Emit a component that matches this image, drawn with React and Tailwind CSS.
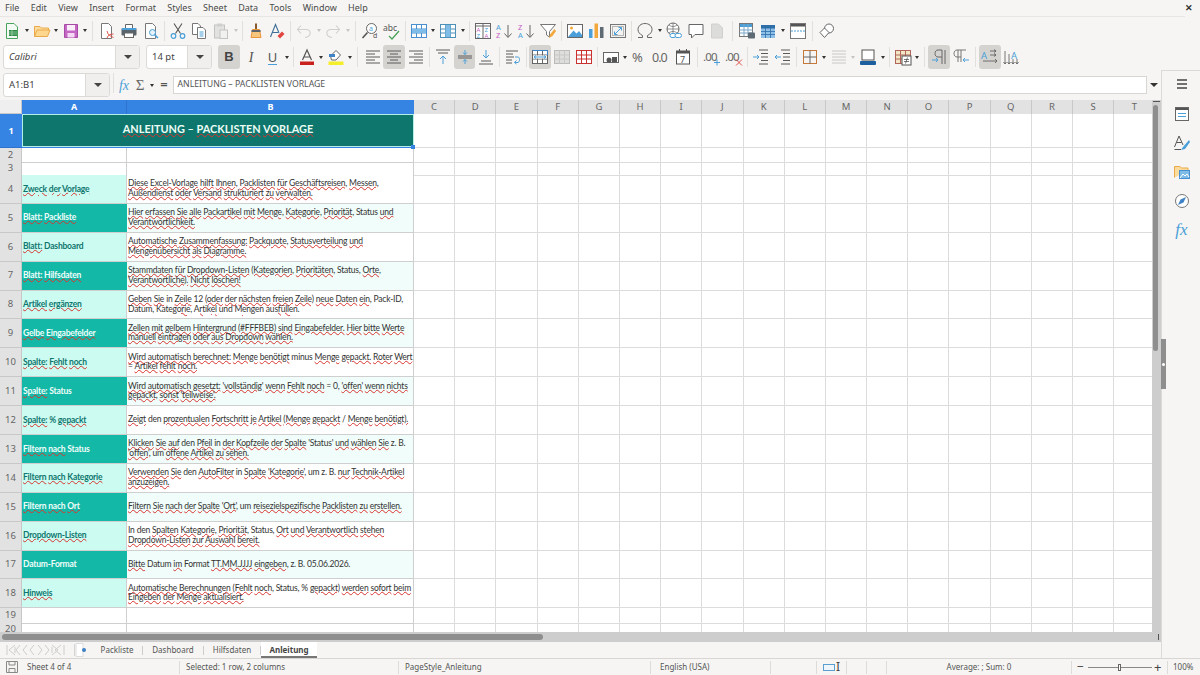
const GRAY = "#5a5a5a";
const BLUE = "#4a9fd8";

const Svg = ({ children, size = 18 }) => (
  <svg width={size} height={size} viewBox="0 0 18 18" fill="none" strokeWidth="1">
    {children}
  </svg>
);

const Btn = ({ children, on }) => (
  <div className={on ? "flex h-6 w-[21.7px] shrink-0 items-center justify-center rounded-[3px] bg-[#d5d3d0]" : "flex h-6 w-[21.7px] shrink-0 items-center justify-center"}>
    {children}
  </div>
);

const Drop = ({ dim }) => (
  <div className="flex h-6 w-[7.5px] shrink-0 items-center justify-center">
    <div className={dim ? "h-0 w-0 border-x-[2.5px] border-t-[3px] border-x-transparent border-t-[#c4c4c4]" : "h-0 w-0 border-x-[2.5px] border-t-[3px] border-x-transparent border-t-[#333]"} />
  </div>
);

const Sep = ({ wide }) => (
  <div className={wide ? "flex h-6 w-[7.5px] shrink-0 justify-center py-[2px]" : "flex h-6 w-[5.3px] shrink-0 justify-center py-[2px]"}>
    <div className="w-px bg-[#e2e0dd]" />
  </div>
);

const Lines = ({ rows, color = GRAY }) => (
  <>
    {rows.map(([x1, x2, y], i) => (
      <path key={i} d={`M${x1} ${y}H${x2}`} stroke={color} />
    ))}
  </>
);

const Grid3 = ({ stroke, fill = "#fff" }) => (
  <>
    <rect x="1.5" y="2.5" width="15" height="13" fill={fill} stroke={stroke} />
    <path d="M1.5 7H16.5M1.5 11H16.5M6.5 2.5V15.5M11.5 2.5V15.5" stroke={stroke} />
  </>
);

const icons = {
  new: (
    <Svg>
      <path d="M3.5 1.5H11L14.5 5V16.5H3.5Z" fill="#f4fbf4" stroke="#4aa35a" />
      <rect x="6" y="8" width="8" height="6" fill="#2e8b46" />
      <path d="M6 10H14M6 12H14M9 8V14" stroke="#bfe5c6" strokeWidth=".6" />
    </Svg>
  ),
  open: (
    <Svg>
      <path d="M1.5 14.5V4.5H7L8.5 6H15.5V8" fill="#fbdc9c" stroke="#eaa94a" />
      <path d="M1.5 14.5L4 8H17L14.5 14.5Z" fill="#fdd78d" stroke="#eaa94a" />
    </Svg>
  ),
  save: (
    <Svg>
      <path d="M2.5 2.5H15.5V15.5H2.5Z" fill="#c568c5" stroke="#a64aa6" />
      <rect x="5" y="3" width="8" height="5.5" fill="#fbeefb" />
      <rect x="5.5" y="11" width="7" height="4.5" fill="#f5d9f5" />
    </Svg>
  ),
  pdf: (
    <Svg>
      <path d="M3.5 1.5H10.5L13.5 4.5V16.5H3.5Z" fill="#fff" stroke="#777" />
      <path d="M9 9C10 13 12 14 15.5 15.5M9 16C10.5 13 11.5 12 15.5 12" stroke="#e0524a" />
    </Svg>
  ),
  print: (
    <Svg>
      <path d="M5.5 6V2.5H12.5V6" fill="#fff" stroke="#666" />
      <rect x="1.5" y="6" width="15" height="7.5" rx="1" fill="#59636b" />
      <rect x="2" y="6" width="14" height="2" fill="#4a9fd8" />
      <rect x="4.5" y="11" width="9" height="4.5" fill="#fff" stroke="#666" />
    </Svg>
  ),
  preview: (
    <Svg>
      <path d="M3.5 1.5H10.5L13.5 4.5V16.5H3.5Z" fill="#fff" stroke="#777" />
      <circle cx="10.5" cy="10.5" r="3" fill="#e7f3fb" stroke={BLUE} />
      <path d="M12.5 12.5L16 16" stroke={BLUE} strokeWidth="1.5" />
    </Svg>
  ),
  cut: (
    <Svg>
      <path d="M5 1.5L11.5 11.5M13 1.5L6.5 11.5" stroke="#555" strokeWidth="1.1" />
      <circle cx="4.5" cy="14" r="2.3" stroke={BLUE} strokeWidth="1.2" />
      <circle cx="13.5" cy="14" r="2.3" stroke={BLUE} strokeWidth="1.2" />
    </Svg>
  ),
  copy: (
    <Svg>
      <path d="M2.5 1.5H8L10.5 4V12.5H2.5Z" fill="#fff" stroke="#777" />
      <path d="M7.5 5.5H13L15.5 8V16.5H7.5Z" fill="#fff" stroke="#777" />
      <path d="M9.5 10H13.5M9.5 12H13.5M9.5 14H13.5" stroke={BLUE} />
    </Svg>
  ),
  paste: (
    <Svg>
      <rect x="2.5" y="3" width="10" height="13" fill="#e2e2e0" stroke="#c3c3c1" />
      <rect x="5" y="1.5" width="5" height="3" fill="#cfcfcd" />
      <rect x="8" y="8" width="7.5" height="8.5" fill="#f1f1f0" stroke="#c3c3c1" />
    </Svg>
  ),
  clone: (
    <Svg>
      <path d="M9 1.5V7" stroke="#8a5a2c" strokeWidth="2" />
      <path d="M5.5 7.5H12.5L14 15.5H4Z" fill="#f6c67e" stroke="#e8963a" />
      <rect x="4.5" y="8" width="9" height="2" fill="#59636b" />
    </Svg>
  ),
  clear: (
    <Svg>
      <path d="M2.5 15L7.5 2.5L11 11M4.5 10.5H10" stroke="#3f6f98" strokeWidth="1.1" />
      <path d="M9.5 14L14 9.5L16.5 12L12 16.5Z" fill="#e2453f" />
    </Svg>
  ),
  undo: (
    <Svg>
      <path d="M3 7.5H11C17 7.5 16.5 15 10 15.5M6 3.5L2.5 7.5L6 11.5" stroke="#d0d0ce" strokeWidth="1.1" />
    </Svg>
  ),
  redo: (
    <Svg>
      <path d="M15 7.5H7C1 7.5 1.5 15 8 15.5M12 3.5L15.5 7.5L12 11.5" stroke="#d0d0ce" strokeWidth="1.1" />
    </Svg>
  ),
  find: (
    <Svg>
      <circle cx="10.5" cy="6.5" r="5" fill="#fff" stroke="#666" />
      <path d="M6.5 10.5L1.5 16" stroke="#555" strokeWidth="1.6" />
      <text x="8" y="9" fontSize="7" fill={BLUE} fontFamily="Noto Sans">a</text>
      <text x="12" y="16" fontSize="7" fill="#555" fontFamily="Noto Sans">d</text>
    </Svg>
  ),
  spell: (
    <Svg>
      <text x="0" y="9" fontSize="8.5" fill="#555" fontFamily="Noto Sans">abc</text>
      <path d="M6 14L9 17L16 9" stroke="#4aa35a" strokeWidth="1.3" />
    </Svg>
  ),
  rows: (
    <Svg>
      <Grid3 stroke="#4a8fd0" />
      <rect x="2" y="7" width="14" height="4" fill="#7fbde8" />
    </Svg>
  ),
  cols: (
    <Svg>
      <Grid3 stroke="#4f90b8" />
      <rect x="6.5" y="3" width="5" height="12" fill="#7fbde8" />
    </Svg>
  ),
  sort: (
    <Svg>
      <rect x="1.5" y="1.5" width="15" height="15" fill="#fff" stroke="#666" />
      <path d="M1.5 4H16.5M9 1.5V16.5" stroke="#666" />
      <text x="2.5" y="10" fontSize="6" fill="#c45dc4" fontFamily="Noto Sans">A</text>
      <text x="2.5" y="16" fontSize="6" fill="#4a9fd8" fontFamily="Noto Sans">Z</text>
      <text x="10.5" y="10" fontSize="6" fill="#4a9fd8" fontFamily="Noto Sans">Z</text>
      <text x="10.5" y="16" fontSize="6" fill="#c45dc4" fontFamily="Noto Sans">A</text>
    </Svg>
  ),
  asc: (
    <Svg>
      <text x="1" y="8" fontSize="7.5" fill={BLUE} fontFamily="Noto Sans">A</text>
      <text x="1" y="16" fontSize="7.5" fill="#c45dc4" fontFamily="Noto Sans">Z</text>
      <path d="M13 3V15M9.5 11.5L13 15.5L16.5 11.5" stroke="#666" />
    </Svg>
  ),
  desc: (
    <Svg>
      <text x="1" y="8" fontSize="7.5" fill="#c45dc4" fontFamily="Noto Sans">Z</text>
      <text x="1" y="16" fontSize="7.5" fill={BLUE} fontFamily="Noto Sans">A</text>
      <path d="M13 3V15M9.5 11.5L13 15.5L16.5 11.5" stroke="#666" />
    </Svg>
  ),
  filter: (
    <Svg>
      <path d="M1.5 2.5H16.5L10.5 9.5V15L7.5 13V9.5Z" fill="#fff" stroke="#777" />
      <path d="M15.5 7L11 12.5L10 16L13.5 14L17 9Z" fill="#f2a83c" />
    </Svg>
  ),
  image: (
    <Svg>
      <rect x="1.5" y="2.5" width="15" height="13" fill="#fff" stroke="#666" />
      <circle cx="5.5" cy="6" r="1.5" fill="#f2a83c" />
      <path d="M2 15L7.5 8.5L10.5 11.5L13 9L16 13V15Z" fill={BLUE} />
    </Svg>
  ),
  chart: (
    <Svg>
      <rect x="2" y="7" width="3.5" height="9" fill={BLUE} />
      <rect x="7.5" y="1.5" width="3.5" height="14.5" fill="#f2a83c" />
      <rect x="13" y="5" width="3.5" height="11" fill="#5f6b74" />
    </Svg>
  ),
  frame: (
    <Svg>
      <rect x="1.5" y="2.5" width="15" height="13" fill="#f3f3f2" stroke="#777" />
      <rect x="3.5" y="4.5" width="11" height="9" stroke="#b5b5b5" />
      <path d="M6 12L12 6M9.5 5.5H12.5V8.5M5.5 9.5V12.5H8.5" stroke={BLUE} />
    </Svg>
  ),
  omega: (
    <Svg>
      <path d="M2 15.5H6.5V13.5C3.5 12 2 10 2 7.5C2 4 5 1.5 9 1.5S16 4 16 7.5C16 10 14.5 12 11.5 13.5V15.5H16" stroke="#666" />
    </Svg>
  ),
  link: (
    <Svg>
      <circle cx="8" cy="7" r="6" fill="#fff" stroke="#666" />
      <path d="M2 7H14M8 1V13M4 3C6 5 10 5 12 3M4 11C6 9 10 9 12 11" stroke="#666" strokeWidth=".7" />
      <rect x="5" y="11.5" width="6" height="4" rx="2" fill="#fff" stroke={BLUE} />
      <rect x="10" y="11.5" width="6.5" height="4" rx="2" fill="#fff" stroke={BLUE} />
    </Svg>
  ),
  comment: (
    <Svg>
      <path d="M2 2.5H16V12.5H8L4.5 16V12.5H2Z" fill="#fff" stroke="#666" />
    </Svg>
  ),
  note: (
    <Svg>
      <path d="M3.5 2H10.5L14.5 6V16H3.5Z" fill="#dcdcdb" stroke="#d0d0cf" />
    </Svg>
  ),
  freeze: (
    <Svg>
      <rect x="1.5" y="1.5" width="13" height="13" fill="#fff" stroke="#777" />
      <rect x="2" y="2" width="12" height="3" fill="#4a9fd8" />
      <path d="M1.5 8H14.5M1.5 11H14.5M6 2V14M10 2V14" stroke="#7aa7c7" />
      <rect x="10" y="10.5" width="7" height="6" rx="1" fill="#5f6b74" />
    </Svg>
  ),
  table: (
    <Svg>
      <rect x="2" y="3" width="14" height="13" fill="#8fc1e8" />
      <rect x="2" y="3" width="14" height="3.5" fill="#2f6fa8" />
      <path d="M2 9.5H16M2 12.5H16M6.5 3V16M11.5 3V16" stroke="#2f6fa8" strokeWidth=".8" />
    </Svg>
  ),
  split: (
    <Svg>
      <rect x="1.5" y="1.5" width="15" height="15" fill="#fff" stroke="#777" />
      <rect x="2" y="2" width="14" height="2.5" fill="#555" />
      <path d="M2 9H16" stroke={BLUE} strokeDasharray="2 1" />
    </Svg>
  ),
  shapes: (
    <Svg>
      <circle cx="11" cy="6.5" r="4.5" fill="#fff" stroke="#666" />
      <path d="M2 10.5L6.5 6L11 10.5L6.5 15.5Z" fill="#fff" stroke="#666" />
    </Svg>
  ),
  fontColor: (
    <Svg>
      <path d="M4.5 12L9 2L13.5 12M6 9H12" stroke="#555" strokeWidth="1.2" />
      <rect x="2" y="13.5" width="14" height="3.5" fill="#c9211e" />
    </Svg>
  ),
  hilite: (
    <Svg>
      <path d="M3.5 8L9 2.5L13.5 7L9 12H4.5Z" fill="#fff" stroke="#666" />
      <path d="M2 6H8V9H2Z" fill="#3f83c6" />
      <rect x="1.5" y="13.5" width="15" height="3.5" fill="#f5ee2a" />
    </Svg>
  ),
  alignLeft: <Svg><Lines rows={[[2, 16, 3], [2, 11, 6], [2, 16, 9], [2, 11, 12], [2, 16, 15]]} /></Svg>,
  alignCenter: <Svg><Lines rows={[[2, 16, 3], [5, 13, 6], [2, 16, 9], [5, 13, 12], [2, 16, 15]]} /></Svg>,
  alignRight: <Svg><Lines rows={[[2, 16, 3], [7, 16, 6], [2, 16, 9], [7, 16, 12], [2, 16, 15]]} /></Svg>,
  vTop: (
    <Svg>
      <Lines rows={[[2, 16, 2], [4, 14, 5]]} />
      <path d="M9 16V8M6 11L9 8L12 11" stroke={BLUE} />
    </Svg>
  ),
  vMid: (
    <Svg>
      <Lines rows={[[2, 16, 8], [2, 16, 10]]} />
      <path d="M9 2V6.5M7 4.5L9 6.5L11 4.5M9 16V11.5M7 13.5L9 11.5L11 13.5" stroke={BLUE} />
    </Svg>
  ),
  vBot: (
    <Svg>
      <Lines rows={[[4, 14, 13], [2, 16, 16]]} />
      <path d="M9 2V10M6 7L9 10L12 7" stroke={BLUE} />
    </Svg>
  ),
  wrap: (
    <Svg>
      <Lines rows={[[2, 14, 3], [2, 9, 6], [2, 10, 9], [2, 8, 12], [2, 8, 15]]} />
      <path d="M11 9H14C16 9 16 14 14 14.5H10.5M12.5 12.5L10.5 14.5L12.5 16" stroke={BLUE} />
    </Svg>
  ),
  merge: (
    <Svg>
      <Grid3 stroke="#666" />
      <rect x="2" y="7.5" width="14" height="3" fill="#fff" />
      <path d="M3 9H15M5 7.5L3 9L5 10.5M13 7.5L15 9L13 10.5" stroke={BLUE} />
      <path d="M1.5 2.5H16.5V7" stroke="#3c85c8" />
    </Svg>
  ),
  mergeOff: (
    <Svg>
      <rect x="1.5" y="2.5" width="15" height="13" fill="#dededc" stroke="#bbb" />
      <path d="M1.5 7H16.5M1.5 11H16.5M6.5 2.5V15.5M11.5 2.5V15.5" stroke="#c8c8c6" />
    </Svg>
  ),
  unmerge: <Svg><Grid3 stroke="#c9312e" /></Svg>,
  currency: (
    <Svg>
      <rect x="1.5" y="4.5" width="15" height="10" fill="#fff" stroke="#666" />
      <circle cx="7" cy="12" r="2.5" fill="#555" />
      <rect x="10" y="9" width="5" height="5" fill="#555" />
    </Svg>
  ),
  percent: (
    <Svg>
      <text x="1" y="14" fontSize="13" fill="#666" fontFamily="Noto Sans">%</text>
    </Svg>
  ),
  number: (
    <Svg>
      <text x="0" y="13.5" fontSize="12.5" letterSpacing="-1" fill="#666" fontFamily="Noto Sans">0.0</text>
    </Svg>
  ),
  date: (
    <Svg>
      <rect x="2.5" y="3" width="13" height="13" fill="#fff" stroke="#555" />
      <rect x="2.5" y="3" width="13" height="2.5" fill="#555" />
      <path d="M5.5 1V4M12.5 1V4" stroke="#555" />
      <text x="6" y="14.5" fontSize="9" fill="#555" fontFamily="Noto Sans">7</text>
    </Svg>
  ),
  addDec: (
    <Svg>
      <text x="0" y="13" fontSize="11.5" letterSpacing="-.8" fill="#666" fontFamily="Noto Sans">.00</text>
      <path d="M14 11.5V17.5M11 14.5H17" stroke={BLUE} />
    </Svg>
  ),
  delDec: (
    <Svg>
      <text x="0" y="13" fontSize="11.5" letterSpacing="-.8" fill="#666" fontFamily="Noto Sans">.00</text>
      <path d="M11 11.5L17 17.5M17 11.5L11 17.5" stroke="#e0524a" />
    </Svg>
  ),
  indent: (
    <Svg>
      <Lines rows={[[7, 16, 2], [9, 16, 5.5], [9, 16, 9], [9, 16, 12.5], [7, 16, 16]]} />
      <path d="M1 9H7M5 7L7 9L5 11" stroke={BLUE} />
    </Svg>
  ),
  outdent: (
    <Svg>
      <Lines rows={[[7, 16, 2], [9, 16, 5.5], [9, 16, 9], [9, 16, 12.5], [7, 16, 16]]} />
      <path d="M1 9H7M3 7L1 9L3 11" stroke={BLUE} />
    </Svg>
  ),
  borders: (
    <Svg>
      <rect x="2.5" y="2.5" width="13" height="13" stroke="#c67a3a" />
      <path d="M9 2.5V15.5M2.5 9H15.5" stroke="#666" />
    </Svg>
  ),
  borderStyle: <Svg><Lines rows={[[2, 16, 3], [2, 16, 6], [2, 16, 9], [2, 16, 12], [2, 16, 15]]} color="#c8c8c8" /></Svg>,
  borderColor: (
    <Svg>
      <rect x="3" y="2" width="12" height="10" fill="#fff" stroke="#555" />
      <rect x="1" y="13" width="16" height="4" rx="1" fill="#1c5e9e" />
    </Svg>
  ),
  cond: (
    <Svg>
      <Grid3 stroke="#b0645a" fill="#f3e6c7" />
      <rect x="8" y="8" width="9" height="9" fill="#fff" stroke="#555" />
      <path d="M10 11.5H15M10 13.5H15M13.5 9.5L11.5 15.5" stroke="#555" strokeWidth=".8" />
    </Svg>
  ),
  ltr: (
    <Svg>
      <path d="M12 2V16M15 2V16M12 2H8C4 2 4 9 8 9H12" stroke="#666" />
      <path d="M2 12H8M6 10L8 12L6 14" stroke={BLUE} />
    </Svg>
  ),
  rtl: (
    <Svg>
      <path d="M6 2V14M9 2V14M14 2H5C1 2 1 9 5 9H9" stroke="#777" />
      <path d="M11 12H17M13 10L11 12L13 14" stroke={BLUE} />
    </Svg>
  ),
  horiz: (
    <Svg>
      <text x="0" y="10.5" fontSize="9.5" fill={BLUE} fontFamily="Noto Sans">A</text>
      <path d="M9 3H15M13 1.5L15 3L13 4.5M9 7H15M13 5.5L15 7L13 8.5M2 13H16M14 11L16 13L14 15" stroke="#555" strokeWidth=".8" />
    </Svg>
  ),
  vert: (
    <Svg>
      <text x="8" y="10.5" fontSize="9.5" fill={BLUE} fontFamily="Noto Sans">A</text>
      <path d="M2 3V16M.5 14L2 16L3.5 14M6 6V16M4.5 14L6 16L7.5 14M10 11V16M8.5 14L10 16L11.5 14M14 11V16M12.5 14L14 16L15.5 14" stroke="#555" strokeWidth=".8" />
    </Svg>
  ),
};

const Ic = ({ n, on }) => <Btn on={on}>{icons[n]}</Btn>;

const Combo = ({ children, outer, drop, textClass }) => (
  <div className={`flex h-[23.5px] items-stretch rounded-[3px] border border-[#dcdad7] bg-white ${outer}`}>
    <div className={`flex flex-1 items-center pl-[5px] text-[9.5px] text-[#444] ${textClass}`}>{children}</div>
    <div className={`flex items-center justify-center rounded-r-[3px] border-l border-[#dcdad7] bg-[#f0efed] ${drop}`}>
      <div className="h-0 w-0 border-x-[4px] border-t-[4px] border-x-transparent border-t-[#444]" />
    </div>
  </div>
);

const MenuBar = () => (
  <div className="flex h-4 shrink-0 items-center justify-between pr-[7px] text-[9px] text-[#4a4a4a]">
    <div className="flex gap-[11.3px] pl-[5px]">
      {["File", "Edit", "View", "Insert", "Format", "Styles", "Sheet", "Data", "Tools", "Window", "Help"].map((m) => (
        <span key={m}>{m}</span>
      ))}
    </div>
    <span className="text-[9px] font-bold text-[#333]">✕</span>
  </div>
);

const ToolbarOne = () => (
  <div className="flex h-[27px] items-center pl-[1.5px]">
    <Ic n="new" /><Drop /><Ic n="open" /><Drop /><Ic n="save" /><Drop /><Sep wide />
    <Ic n="pdf" /><Ic n="print" /><Ic n="preview" /><Sep />
    <Ic n="cut" /><Ic n="copy" /><Ic n="paste" /><Drop dim /><Sep />
    <Ic n="clone" /><Ic n="clear" /><Sep />
    <Ic n="undo" /><Drop dim /><Ic n="redo" /><Drop dim /><Sep wide />
    <Ic n="find" /><Ic n="spell" /><Sep />
    <Ic n="rows" /><Drop /><Ic n="cols" /><Drop /><Sep />
    <Ic n="sort" /><Ic n="asc" /><Ic n="desc" /><Ic n="filter" /><Sep />
    <Ic n="image" /><Ic n="chart" /><Ic n="frame" /><Sep />
    <Ic n="omega" /><Drop /><Ic n="link" /><Ic n="comment" /><Ic n="note" /><Sep wide />
    <Ic n="freeze" /><Ic n="table" /><Drop /><Ic n="split" /><Sep wide />
    <Ic n="shapes" />
  </div>
);

const ToolbarTwo = () => (
  <div className="flex h-[26px] items-center pl-[3px]">
    <Combo outer="w-[137px]" drop="w-6" textClass="italic">Calibri</Combo>
    <Combo outer="ml-[6px] w-[66px]" drop="w-6" textClass="">14 pt</Combo>
    <div className="ml-[6px] flex h-6 w-[22px] shrink-0 items-center justify-center rounded-[3px] bg-[#d5d3d0] font-['Liberation_Sans',sans-serif] text-[13px] font-bold text-[#444]">B</div>
    <div className="flex h-6 w-[22px] shrink-0 items-center justify-center font-['Liberation_Serif',serif] text-[14px] italic text-[#555]">I</div>
    <div className="flex h-6 w-[21px] shrink-0 items-center justify-center">
      <span className="border-b border-[#4a9fd8] text-[13px] leading-[14px] text-[#555]">U</span>
    </div>
    <Drop /><Sep />
    <Ic n="fontColor" /><Drop /><Ic n="hilite" /><Drop /><Sep wide />
    <Ic n="alignLeft" /><Ic n="alignCenter" on /><Ic n="alignRight" /><Sep />
    <Ic n="vTop" /><Ic n="vMid" on /><Ic n="vBot" /><Sep />
    <Ic n="wrap" /><Sep />
    <Ic n="merge" on /><Ic n="mergeOff" /><Ic n="unmerge" /><Sep />
    <Ic n="currency" /><Drop /><Ic n="percent" /><Ic n="number" /><Ic n="date" /><Sep wide />
    <Ic n="addDec" /><Ic n="delDec" /><Sep />
    <Ic n="indent" /><Ic n="outdent" /><Sep />
    <Ic n="borders" /><Drop /><Ic n="borderStyle" /><Drop dim /><Ic n="borderColor" /><Drop /><Sep />
    <Ic n="cond" /><Drop /><Sep wide />
    <Ic n="ltr" on /><Ic n="rtl" /><Sep wide />
    <Ic n="horiz" on /><Ic n="vert" />
  </div>
);

const FormulaBar = () => (
  <div className="flex h-[30px] shrink-0 items-start pl-[3px] pt-[3px]">
    <Combo outer="w-[107px]" drop="w-6" textClass="">A1:B1</Combo>
    <div className="ml-[3px] h-5 w-px bg-[#e2e0dd]" />
    <div className="flex h-6 w-5 items-center justify-center font-['Liberation_Serif',serif] text-[14px] italic text-[#4a9fd8]">fx</div>
    <div className="flex h-6 w-3 items-center justify-center font-['Liberation_Serif',serif] text-[15px] text-[#666]">Σ</div>
    <div className="ml-[2px]"><Drop /></div>
    <div className="flex h-6 w-[17px] items-center justify-center text-[13px] font-semibold text-[#555]">=</div>
    <div className="mt-[3px] flex h-[18px] flex-1 items-center border border-[#d8d6d3] bg-white pl-[4px] text-[8.7px] text-[#555]">
      ANLEITUNG – PACKLISTEN VORLAGE
    </div>
    <div className="flex h-6 w-[14px] items-center justify-center">
      <div className="h-0 w-0 border-x-[4px] border-t-[4px] border-x-transparent border-t-[#333]" />
    </div>
  </div>
);

const plainWords = new Set(["in", "In", "den", "Status", "Status,", "'Status'", "Datum", "Datum,", "Format", "um", "z.", "B.", "minus", "Pack-ID,", "=", "0,", "/", "%", "12", "05.06.2026.", "Dashboard", "Datum-Format", "–"]);

const Spell = ({ text }) =>
  text.split(" ").map((w, i) => (
    <span key={i}>
      {i > 0 && " "}
      {plainWords.has(w) ? (
        w
      ) : (
        <span className="underline decoration-[#d8352f] decoration-wavy decoration-[0.6px] underline-offset-0">{w}</span>
      )}
    </span>
  ));

const rows = [
  [4, "Zweck der Vorlage", ["Diese Excel-Vorlage hilft Ihnen, Packlisten für Geschäftsreisen, Messen,", "Außendienst oder Versand strukturiert zu verwalten."]],
  [5, "Blatt: Packliste", ["Hier erfassen Sie alle Packartikel mit Menge, Kategorie, Priorität, Status und", "Verantwortlichkeit."]],
  [6, "Blatt: Dashboard", ["Automatische Zusammenfassung: Packquote, Statusverteilung und", "Mengenübersicht als Diagramme."]],
  [7, "Blatt: Hilfsdaten", ["Stammdaten für Dropdown-Listen (Kategorien, Prioritäten, Status, Orte,", "Verantwortliche). Nicht löschen!"]],
  [8, "Artikel ergänzen", ["Geben Sie in Zeile 12 (oder der nächsten freien Zeile) neue Daten ein, Pack-ID,", "Datum, Kategorie, Artikel und Mengen ausfüllen."]],
  [9, "Gelbe Eingabefelder", ["Zellen mit gelbem Hintergrund (#FFFBEB) sind Eingabefelder. Hier bitte Werte", "manuell eintragen oder aus Dropdown wählen."]],
  [10, "Spalte: Fehlt noch", ["Wird automatisch berechnet: Menge benötigt minus Menge gepackt. Roter Wert", "= Artikel fehlt noch."]],
  [11, "Spalte: Status", ["Wird automatisch gesetzt: 'vollständig' wenn Fehlt noch = 0, 'offen' wenn nichts", "gepackt, sonst 'teilweise'."]],
  [12, "Spalte: % gepackt", ["Zeigt den prozentualen Fortschritt je Artikel (Menge gepackt / Menge benötigt)."]],
  [13, "Filtern nach Status", ["Klicken Sie auf den Pfeil in der Kopfzeile der Spalte 'Status' und wählen Sie z. B.", "'offen', um offene Artikel zu sehen."]],
  [14, "Filtern nach Kategorie", ["Verwenden Sie den AutoFilter in Spalte 'Kategorie', um z. B. nur Technik-Artikel", "anzuzeigen."]],
  [15, "Filtern nach Ort", ["Filtern Sie nach der Spalte 'Ort', um reisezielspezifische Packlisten zu erstellen."]],
  [16, "Dropdown-Listen", ["In den Spalten Kategorie, Priorität, Status, Ort und Verantwortlich stehen", "Dropdown-Listen zur Auswahl bereit."]],
  [17, "Datum-Format", ["Bitte Datum im Format TT.MM.JJJJ eingeben, z. B. 05.06.2026."]],
  [18, "Hinweis", ["Automatische Berechnungen (Fehlt noch, Status, % gepackt) werden sofort beim", "Eingeben der Menge aktualisiert."]],
];

const rest = "CDEFGHIJKLMNOPQRST".split("");
const template = "grid grid-cols-[22px_105px_287px_repeat(18,41.2px)]";

const Blank = () => rest.map((c) => <div key={c} className="border-r border-b border-[#dcdcdc]" />);

const RowHead = ({ n, on }) => (
  <div className={on ? "flex items-center justify-center border-b border-[#2f73cf] bg-[#3584e4] text-[9px] font-bold text-white" : "flex items-center justify-center border-r border-b border-[#c8c8c8] bg-[#e2e2e2] text-[9.5px] text-[#666]"}>
    {n}
  </div>
);

const EmptyRow = ({ n, height }) => (
  <div className={`${template} ${height}`}>
    <RowHead n={n} />
    <div className="border-r border-b border-[#cfcfcf]" />
    <div className="border-r border-b border-[#cfcfcf]" />
    <Blank />
  </div>
);

const Sheet = () => (
  <div className="min-h-0 flex-1 overflow-hidden bg-white font-['Lato',sans-serif]">
    <div className={`${template} h-[14px] font-['Noto_Sans',sans-serif]`}>
      <div className="border-r border-b border-[#c8c8c8] bg-[#efefef]" />
      <div className="flex items-center justify-center border-r border-[#2f73cf] bg-[#3584e4] text-[9px] font-bold text-white">A</div>
      <div className="flex items-center justify-center bg-[#3584e4] text-[9px] font-bold text-white">B</div>
      {rest.map((c) => (
        <div key={c} className="flex items-center justify-center border-r border-[#c8c8c8] bg-[#e2e2e2] text-[9.5px] text-[#666]">{c}</div>
      ))}
    </div>
    <div className={`${template} relative h-[34px] font-['Noto_Sans',sans-serif]`}>
      <RowHead n="1" on />
      <div className="col-span-2 flex items-center justify-center border border-b-2 border-[#b5eee4] bg-[#0f766e] pb-[2px] font-['Lato',sans-serif] text-[10.9px] font-bold text-[#ecfdf5]">
        <span><Spell text="ANLEITUNG – PACKLISTEN VORLAGE" /></span>
      </div>
      <Blank />
      <div className="absolute left-[22px] top-[33px] h-px w-[392px] bg-[#3584e4]" />
      <div className="absolute left-[411px] top-[31px] h-[4px] w-[4px] bg-[#3584e4]" />
    </div>
    <div className="font-['Noto_Sans',sans-serif]">
      <EmptyRow n="2" height="h-[13px]" />
      <EmptyRow n="3" height="h-[14px]" />
    </div>
    {rows.map(([n, label, lines]) => (
      <div key={n} className={`${template} h-[28.9px]`}>
        <div className="grid font-['Noto_Sans',sans-serif]"><RowHead n={n} /></div>
        <div className={n % 2 ? "flex items-center truncate border-b border-[#cfcfcf] bg-[#14b8a6] pl-px text-[8.5px] font-bold tracking-[-0.2px] text-[#f0fdfa]" : "flex items-center truncate border-r border-b border-[#cfcfcf] bg-[#ccfbf1] pl-px text-[8.5px] font-bold tracking-[-0.2px] text-[#0f766e]"}>
          <span><Spell text={label} /></span>
        </div>
        <div className={n % 2 ? "flex flex-col justify-center border-r border-b border-[#cfcfcf] bg-[#f0fdfa] pl-px text-[8.5px] leading-[9.6px] tracking-[-0.2px] whitespace-nowrap text-[#333]" : "flex flex-col justify-center border-r border-b border-[#cfcfcf] bg-white pl-px text-[8.5px] leading-[9.6px] tracking-[-0.2px] whitespace-nowrap text-[#333]"}>
          {lines.map((l) => (
            <div key={l}><Spell text={l} /></div>
          ))}
        </div>
        <Blank />
      </div>
    ))}
    <div className="font-['Noto_Sans',sans-serif]">
      <EmptyRow n="19" height="h-[14px]" />
      <EmptyRow n="20" height="h-[14px]" />
    </div>
  </div>
);

const TabSep = () => <div className="h-[9px] w-px shrink-0 bg-[#ccc]" />;

const TabBar = () => (
  <div className="flex h-4 shrink-0 items-center text-[8px] text-[#555]">
    <div className="ml-[6px] w-[60px]">
      <svg width="60" height="12" viewBox="0 0 60 12" fill="none" stroke="#cdcdcd">
        <path d="M1 1V11M9 1L3 6L9 11M9 3V9M14 1L10 6L14 11M21 1L17 6L21 11M28 1L24 6L28 11M32 1L36 6L32 11M39 1L43 6L39 11M46 1L52 6L46 11M46 3V9M58 1V11M55 1L49 6L55 11" />
      </svg>
    </div>
    <div className="ml-2 h-3 w-px bg-[#d5d5d5]" />
    <div className="w-3">
      <svg width="12" height="14" viewBox="0 0 12 14" fill="none">
        <path d="M1 .5H8V13.5H1Z" fill="#fff" stroke="#ddd" />
        <circle cx="9" cy="7" r="2" fill="#3d7fc4" />
      </svg>
    </div>
    <div className="ml-[5px] flex h-4 w-[50px] items-center justify-center">Packliste</div>
    <TabSep />
    <div className="flex h-4 w-[60px] items-center justify-center">Dashboard</div>
    <TabSep />
    <div className="flex h-4 w-[56px] items-center justify-center">Hilfsdaten</div>
    <TabSep />
    <div className="flex h-4 w-[56px] items-center justify-center border-b-2 border-[#777] bg-white pt-[1px] font-bold text-[#444]">Anleitung</div>
  </div>
);

const HScroll = () => (
  <div className="flex h-[10px] shrink-0 items-center justify-between bg-[#cdcdcd] px-[2px]">
    <div className="h-[6px] w-[541px] rounded-full bg-[#8e8e8e]" />
    <div className="h-[6px] w-px bg-[#555]" />
  </div>
);

const VScroll = () => (
  <div className="flex w-[9px] shrink-0 flex-col bg-[#cdcdcd] px-[1px] pt-[1px]">
    <div className="h-px bg-[#555]" />
    <div className="mt-[3px] h-[246px] w-[5px] rounded-full bg-[#8e8e8e]" />
  </div>
);

const SideBar = () => (
  <div className="relative flex w-[39px] shrink-0 flex-col items-center border-l border-t border-[#dcdad7] pt-[4px] pl-[1px]">
    <div className="flex h-[18px] items-center">
      <svg width="14" height="12" viewBox="0 0 14 12" stroke="#444" strokeWidth="1.3"><path d="M2 2H12M2 6H12M2 10H12" /></svg>
    </div>
    <div className="mt-[12px] flex flex-col gap-[11px]">
      <Svg>
        <rect x="2.5" y="2.5" width="13" height="13" fill="#fff" stroke="#666" />
        <rect x="3" y="3" width="12" height="2" fill="#555" />
        <path d="M5 8.5H13M5 11.5H13" stroke={BLUE} />
      </Svg>
      <Svg>
        <path d="M1.5 13L6 2L10 11M3.5 8.5H8.5M1.5 15.5H8" stroke="#555" />
        <path d="M16 6L10 13L8 16L12 15L17 8Z" fill={BLUE} />
      </Svg>
      <Svg>
        <path d="M1.5 14.5V3.5H7L8.5 5H15V8" fill="#fbdc9c" stroke="#eaa94a" />
        <rect x="6.5" y="7.5" width="10" height="8" fill="#7fbde8" stroke="#4a8fd0" />
        <path d="M7 15L10 11L12 13L14 11L16 14" stroke="#fff" />
      </Svg>
      <Svg>
        <circle cx="9" cy="9" r="6.5" fill="#fff" stroke="#777" />
        <path d="M13 5L10.5 10.5L5 13L7.5 7.5Z" fill="#3f83c6" />
      </Svg>
      <div className="flex h-[18px] w-[18px] items-center justify-center font-['Liberation_Serif',serif] text-[17px] italic text-[#4a9fd8]">fx</div>
    </div>
    <div className="absolute -left-px top-[268px] flex h-[50px] w-[5px] items-center justify-center bg-[#8e8e8e]">
      <div className="h-[3px] w-[3px] rounded-full bg-white" />
    </div>
  </div>
);

const Divider = () => <div className="h-[13px] w-px shrink-0 bg-[#dedcd9]" />;

const StatusBar = () => (
  <div className="flex h-[17px] shrink-0 items-center border-t border-[#d8d6d3] text-[8px] text-[#555]">
    <div className="ml-[6px] w-[21px]">
      <svg width="12" height="12" viewBox="0 0 12 12" fill="none" stroke="#888"><path d="M.5.5H11.5V11.5H.5ZM3 .5V4H9V.5M3 11.5V7.5H9V11.5" /></svg>
    </div>
    <div className="w-[152px]">Sheet 4 of 4</div>
    <Divider />
    <div className="w-[218px] pl-[6px]">Selected: 1 row, 2 columns</div>
    <Divider />
    <div className="w-[251px] pl-[6px]">PageStyle_Anleitung</div>
    <Divider />
    <div className="w-[119px] pl-[9px]">English (USA)</div>
    <Divider />
    <div className="w-[45px]" />
    <Divider />
    <div className="flex w-[29px] items-center gap-[1px] pl-[6px]">
      <div className="h-[7px] w-[12px] border border-[#5b9fd0] bg-[#eef6fb]" />
      <span className="text-[12px] leading-3 text-[#444]">I</span>
    </div>
    <Divider />
    <div className="w-[19px]" />
    <Divider />
    <div className="w-[19px]" />
    <Divider />
    <div className="w-[184px] text-center">Average: ; Sum: 0</div>
    <Divider />
    <div className="flex w-[95px] items-center pl-[5px] text-[#444]">
      <span className="w-[11px] text-[12px] leading-3">−</span>
      <div className="relative h-px w-[64px] bg-[#888]">
        <div className="absolute left-[30px] -top-[3px] h-[7px] w-[3px] border border-[#666] bg-white" />
      </div>
      <span className="ml-[2px] text-[13px] leading-3">+</span>
    </div>
    <Divider />
    <div className="pl-[5px]">100%</div>
  </div>
);

export default function App() {
  return (
    <div className="flex h-[675px] w-[1200px] flex-col overflow-hidden bg-[#f6f5f3] font-['Noto_Sans',sans-serif]">
      <MenuBar />
      <div className="mr-[15px] h-px shrink-0 bg-[#e8e6e3]" />
      <div className="h-[53px] shrink-0">
        <ToolbarOne />
        <ToolbarTwo />
      </div>
      <div className="flex min-h-0 flex-1">
        <div className="flex min-w-0 flex-1 flex-col">
          <FormulaBar />
          <div className="flex min-h-0 flex-1">
            <Sheet />
            <VScroll />
          </div>
          <HScroll />
          <TabBar />
        </div>
        <SideBar />
      </div>
      <StatusBar />
    </div>
  );
}
